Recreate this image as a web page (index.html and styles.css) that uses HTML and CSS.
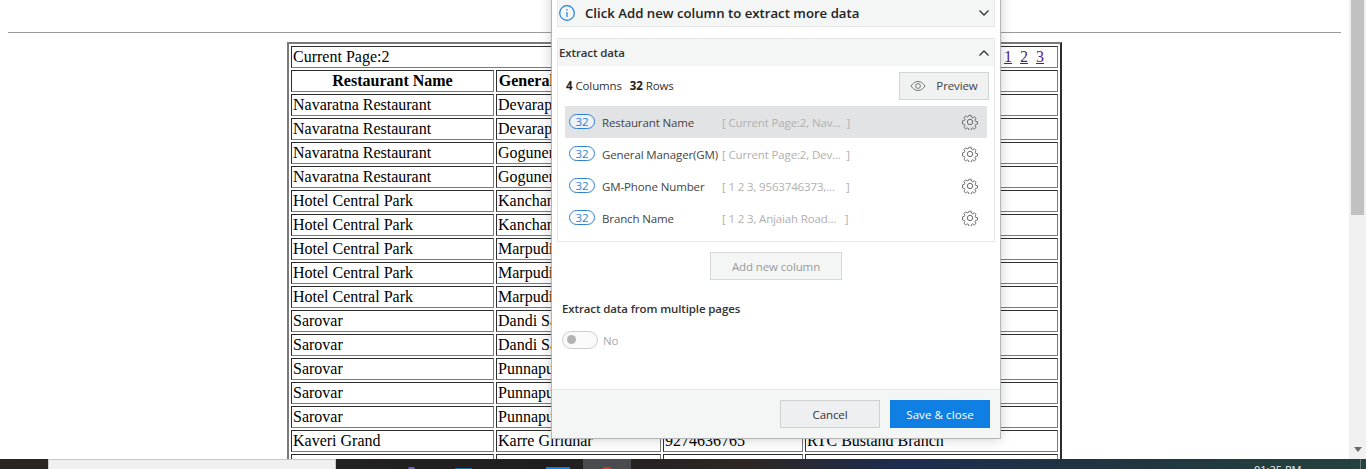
FILE: index.html
```html
<!DOCTYPE html>
<html lang="en">
<head>
<meta charset="utf-8">
<title>Extract data</title>
<link rel="stylesheet" href="styles.css">
</head>
<body>
<div class="screen">
  <div class="window">
    <main class="page">
      <hr class="rule">
      <table class="data" border="2">
        <colgroup><col class="c1"><col class="c2"><col class="c3"><col class="c4"></colgroup>
        <tr><td colspan="3">Current Page:2</td><td class="pager"><a href="#">1</a><a href="#">2</a><a href="#">3</a></td></tr>
        <tr><th>Restaurant Name</th><th>General Manager(GM)</th><th>GM-Phone Number</th><th>Branch Name</th></tr>
        <tr><td>Navaratna Restaurant</td><td>Devarapalli Rao</td><td></td><td></td></tr>
        <tr><td>Navaratna Restaurant</td><td>Devarapalli Rao</td><td></td><td></td></tr>
        <tr><td>Navaratna Restaurant</td><td>Goguneni Rao</td><td></td><td></td></tr>
        <tr><td>Navaratna Restaurant</td><td>Goguneni Rao</td><td></td><td></td></tr>
        <tr><td>Hotel Central Park</td><td>Kanchan Rao</td><td></td><td></td></tr>
        <tr><td>Hotel Central Park</td><td>Kanchan Rao</td><td></td><td></td></tr>
        <tr><td>Hotel Central Park</td><td>Marpudi Rao</td><td></td><td></td></tr>
        <tr><td>Hotel Central Park</td><td>Marpudi Rao</td><td></td><td></td></tr>
        <tr><td>Hotel Central Park</td><td>Marpudi Rao</td><td></td><td></td></tr>
        <tr><td>Sarovar</td><td>Dandi Sai</td><td></td><td></td></tr>
        <tr><td>Sarovar</td><td>Dandi Sai</td><td></td><td></td></tr>
        <tr><td>Sarovar</td><td>Punnapu Rao</td><td></td><td></td></tr>
        <tr><td>Sarovar</td><td>Punnapu Rao</td><td></td><td></td></tr>
        <tr><td>Sarovar</td><td>Punnapu Rao</td><td></td><td></td></tr>
        <tr><td>Kaveri Grand</td><td>Karre Giridhar</td><td>9274636765</td><td>RTC Bustand Branch</td></tr>
        <tr><td>&nbsp;</td><td></td><td></td><td></td></tr>
      </table>

      <section class="dialog">
        <div class="notice">
          <svg class="info" viewBox="0 0 16 16" width="16" height="16"><circle cx="8" cy="8" r="7.300"/><path d="M8 7v5M8 4v1.600"/></svg>
          <strong class="notice-text">Click Add new column to extract more data</strong>
          <svg class="chev" viewBox="0 0 12 8" width="12" height="8"><path d="M1.500 1.500 6 6l4.500-4.500"/></svg>
        </div>
        <div class="panel">
          <div class="panel-head">
            <span>Extract data</span>
            <svg class="chev" viewBox="0 0 12 8" width="12" height="8"><path d="M1.500 6.500 6 2l4.500 4.500"/></svg>
          </div>
          <div class="summary">
            <span><b>4</b> Columns &nbsp;<b>32</b> Rows</span>
            <button class="btn preview">
              <svg class="eye" viewBox="0 0 16 12" width="16" height="12"><path d="M1 6c2-3 4.400-4.500 7-4.500S13 3 15 6c-2 3-4.400 4.500-7 4.500S3 9 1 6z"/><circle cx="8" cy="6" r="2.400"/></svg>
              Preview
            </button>
          </div>
          <ul class="cols">
            <li class="col active">
              <span class="count">32</span><span class="name">Restaurant Name</span><span class="sample">[ Current Page:2, Nav...&nbsp; ]</span>
              <svg class="gear" viewBox="0 0 16 16" width="16" height="16"><use href="#gear"/></svg>
            </li>
            <li class="col">
              <span class="count">32</span><span class="name">General Manager(GM)</span><span class="sample">[ Current Page:2, Dev...&nbsp; ]</span>
              <svg class="gear" viewBox="0 0 16 16" width="16" height="16"><use href="#gear"/></svg>
            </li>
            <li class="col">
              <span class="count">32</span><span class="name">GM-Phone Number</span><span class="sample">[ 1 2 3, 9563746373,...&nbsp; &nbsp; ]</span>
              <svg class="gear" viewBox="0 0 16 16" width="16" height="16"><use href="#gear"/></svg>
            </li>
            <li class="col">
              <span class="count">32</span><span class="name">Branch Name</span><span class="sample">[ 1 2 3, Anjaiah Road...&nbsp; &nbsp;]</span>
              <svg class="gear" viewBox="0 0 16 16" width="16" height="16"><use href="#gear"/></svg>
            </li>
          </ul>
        </div>
        <div class="add-row"><button class="btn add">Add new column</button></div>
        <h3 class="multi">Extract data from multiple pages</h3>
        <div class="toggle-row"><span class="toggle"><i class="knob"></i></span><span class="toggle-label">No</span></div>
        <footer class="foot">
          <button class="btn cancel">Cancel</button>
          <button class="btn save">Save &amp; close</button>
        </footer>
      </section>
    </main>
    <aside class="scrollbar">
      <div class="thumb"></div>
      <div class="track"></div>
      <svg class="arrow" viewBox="0 0 8 5" width="8" height="5"><path d="M0 0h8L4 5z"/></svg>
    </aside>
  </div>
  <div class="taskbar">
    <div class="start"></div>
    <div class="search"></div>
    <div class="tray-icons">
      <i class="ti purple"></i><i class="ti teal"></i><i class="ti blue"></i>
      <span class="ti-active"><i class="red"></i></span>
    </div>
    <div class="clock">01:25 PM</div>
    <div class="desk-edge"></div>
  </div>
</div>
<svg class="defs" width="0" height="0">
  <symbol id="gear" viewBox="0 0 16 16">
    <path d="M6.800 1h2.400l.4 2 1.300.6 1.800-1.100 1.700 1.700-1.100 1.800.6 1.300 2 .4v2.400l-2 .4-.6 1.300 1.100 1.800-1.700 1.700-1.800-1.100-1.300.6-.4 2H6.800l-.4-2-1.300-.6-1.800 1.100-1.700-1.700 1.100-1.800-.6-1.300-2-.4V6.800l2-.4.6-1.300-1.100-1.800 1.700-1.700 1.800 1.100 1.300-.6z" transform="translate(.4 .4) scale(.95)"/>
    <circle cx="8" cy="8" r="2.700"/>
  </symbol>
</svg>
</body>
</html>
```
FILE: styles.css
```css
* { box-sizing: border-box; }
html, body { margin: 0; height: 100%; overflow: hidden; }
body { background: #fff; }
.screen { height: 469px; display: flex; flex-direction: column; }
.window { height: 459px; display: flex; overflow: hidden; }
.page { position: relative; flex: 1; overflow: hidden; padding: 32px 8px 0; font-family: "Liberation Serif", serif; font-size: 16px; color: #000; background: #fff; }
.rule { margin: 0 0 9px; height: 1px; border: 0; background: #9a9a9a; }
.data { width: 775px; margin: 0 0 0 279px; table-layout: fixed; border-collapse: separate; border-spacing: 2px; border: 2px solid; border-color: #7a7a7a #2e2e2e #2e2e2e #7a7a7a; }
.c1 { width: 203px; } .c2 { width: 165px; } .c3 { width: 140px; } .c4 { width: 253px; }
.data td, .data th { height: 22px; padding: 1px; border: 1px solid; border-color: #2e2e2e #7a7a7a #7a7a7a #2e2e2e; white-space: nowrap; overflow: hidden; line-height: 18px; }
.pager { text-align: left; padding-left: 198px !important; }
.pager a { color: #551a8b; margin-right: 8px; }

.dialog { position: absolute; left: 551px; top: -10px; width: 450px; height: 449px; padding-top: 10px; display: flex; flex-direction: column; background: #fff; border: 1px solid #b4b4b4; border-top: 0; box-shadow: 0 0 12px rgba(0,0,0,.2); font-family: "Open Sans", sans-serif; font-size: 11.500px; letter-spacing: -.12px; color: #333; }
.notice { margin: 0 5px; height: 27px; flex: none; display: flex; align-items: center; background: #f4f6f6; border: 1px solid #e6e8e8; border-top: 0; }
.info { margin-left: 1px; flex: none; fill: none; stroke: #1e7fd8; stroke-width: 1.200; }
.notice-text { margin-left: 10px; font-size: 13.200px; font-weight: 600; letter-spacing: 0; color: #222; flex: 1; }
.chev { fill: none; stroke: #333; stroke-width: 1.300; margin-right: 4px; }
.panel { margin: 11px 5px 0; height: 204px; flex: none; border: 1px solid #e6e8e8; }
.panel-head { height: 27px; display: flex; align-items: center; justify-content: space-between; padding-left: 1px; background: #f4f6f6; font-weight: 600; color: #333; }
.summary { height: 39px; display: flex; align-items: center; justify-content: space-between; padding: 0 5px 0 8px; }
.summary b { font-weight: 700; color: #222; letter-spacing: 0; }
.summary b + b { margin-left: 2px; }
.btn { font: inherit; letter-spacing: inherit; border-radius: 0; padding: 0; }
.preview { width: 90px; height: 28px; display: flex; align-items: center; justify-content: center; gap: 10px; background: #f0f1f1; border: 1px solid #d2d4d4; color: #444; }
.eye { fill: none; stroke: #777; stroke-width: 1; }
.cols { list-style: none; margin: 1px 7px 0; padding: 0; }
.col { height: 32px; display: flex; align-items: center; padding-left: 4px; }
.col.active { background: #e2e3e5; }
.count { width: 26px; height: 15px; margin-bottom: 1px; flex: none; display: flex; align-items: center; justify-content: center; border: 1px solid #2e7fd6; border-radius: 8px; background: #fff; color: #2e7fd6; font-size: 11.500px; }
.col.active .count { background: #eef1f5; }
.name { margin-left: 7px; width: 120px; flex: none; white-space: nowrap; color: #444; }
.sample { flex: 1; white-space: nowrap; color: #b0b0b0; letter-spacing: -.15px; }
.gear { margin-right: 9px; flex: none; fill: none; stroke: #6c6c6c; stroke-width: 1; }
.add-row { margin-top: 10px; display: flex; justify-content: center; }
.add { width: 132px; height: 28px; background: #f4f6f6; border: 1px solid #d6d8d8; color: #9a9a9a; }
.multi { margin: 21px 0 0 10px; font-size: 11.500px; line-height: 16px; font-weight: 600; color: #333; }
.toggle-row { margin: 14px 0 0 10px; display: flex; align-items: center; gap: 5px; }
.toggle { width: 36px; height: 18px; border: 1px solid #cfcfcf; border-radius: 9px; padding: 3px 4px; background: #fafafa; }
.knob { display: block; width: 9px; height: 9px; border-radius: 50%; background: #b4b4b4; }
.toggle-label { color: #a8a8a8; }
.foot { margin-top: auto; height: 49px; flex: none; display: flex; justify-content: flex-end; align-items: flex-start; gap: 10px; padding: 10px 10px 0 0; background: #f4f6f6; border-top: 1px solid #e6e8e8; }
.cancel { width: 100px; height: 28px; background: #eeeff0; border: 1px solid #cfd1d1; color: #333; }
.save { width: 100px; height: 28px; background: #0f7fe3; border: 0; color: #fff; letter-spacing: .08px; }

.scrollbar { width: 17px; flex: none; display: flex; flex-direction: column; align-items: center; background: #f1f1f1; }
.thumb { width: 13px; height: 215px; background: #c1c1c1; }
.track { flex: 1; }
.arrow { fill: #6a6a6a; margin-bottom: 7px; }

.taskbar { height: 10px; display: flex; overflow: hidden; position: relative; background: linear-gradient(90deg, #2a2522 0%, #201f1f 40%, #2d2624 55%, #1d2c50 66%, #1f3440 80%, #24423e 100%); }
.start { width: 48px; }
.search { width: 288px; background: #f0f0f0; border: 1px solid #c8c8c8; border-width: 1px 1px 0; }
.tray-icons { display: block; width: 310px; position: relative; }
.ti { position: absolute; bottom: 0; height: 2px; }
.purple { left: 72px; width: 7px; background: #6a60b8; border-radius: 3px 3px 0 0; }
.teal { left: 119px; width: 17px; height: 1px; background: #0f6fa8; }
.blue { left: 210px; width: 24px; background: #1180e0; }
.ti-active { position: absolute; left: 247px; bottom: 0; top: 0; width: 48px; background: #4a4b4e; display: flex; justify-content: center; overflow: hidden; }
.red { display: block; flex: none; width: 16px; height: 16px; margin-top: 8px; border-radius: 50%; background: #d93a30; }
.clock { position: absolute; left: 1254px; top: 4px; font-family: "Open Sans", sans-serif; font-size: 11px; line-height: 14px; color: #e8e8e8; }
.desk-edge { position: absolute; left: 1360px; top: 0; bottom: 0; width: 1px; background: #6a7a78; }
.defs { position: absolute; }
```
